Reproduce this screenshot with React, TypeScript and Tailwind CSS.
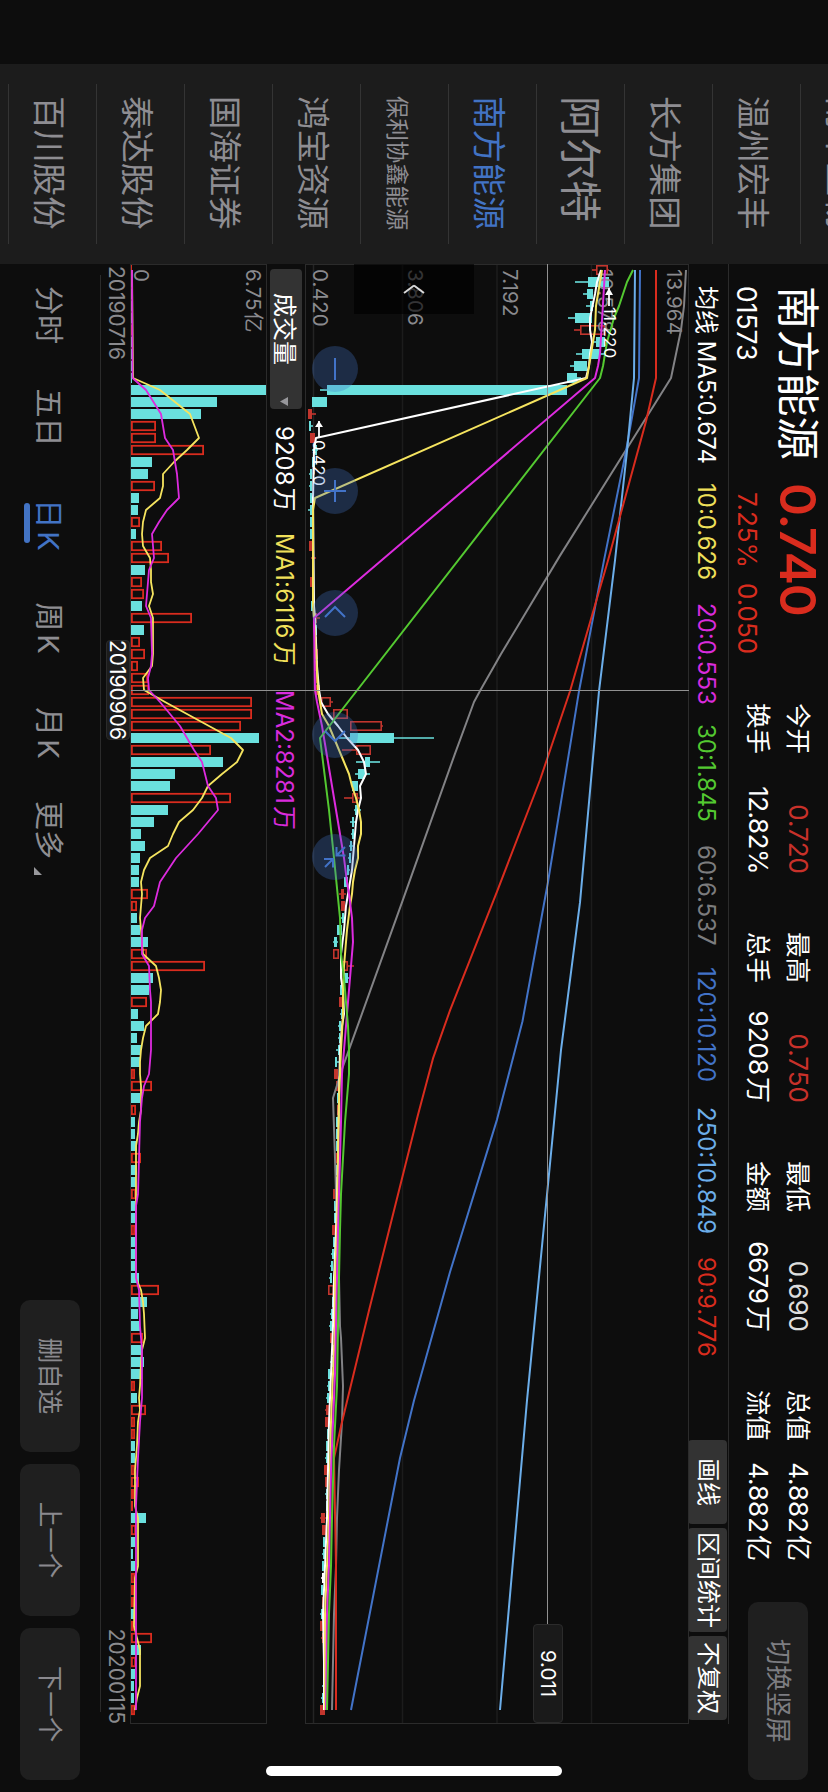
import clsx from "clsx";

const STOCKS = [
  { name: "南华生物", size: "text-[33.4px]" },
  { name: "温州宏丰", size: "text-[33.4px]" },
  { name: "长方集团", size: "text-[33.4px]" },
  { name: "阿尔特", size: "text-[42px]" },
  { name: "南方能源", size: "text-[33.4px]", active: true },
  { name: "保利协鑫能源", size: "text-[22.4px]" },
  { name: "鸿宝资源", size: "text-[33.4px]" },
  { name: "国海证券", size: "text-[33.4px]" },
  { name: "泰达股份", size: "text-[33.4px]" },
  { name: "百川股份", size: "text-[33.4px]" },
];

const QUOTES = [
  [
    { label: "今开", value: "0.720", color: "text-[#c8312a]" },
    { label: "换手", value: "12.82%", color: "text-white tracking-[-0.5px]" },
  ],
  [
    { label: "最高", value: "0.750", color: "text-[#c8312a]" },
    { label: "总手", value: "9208", unit: "万", color: "text-white" },
  ],
  [
    { label: "最低", value: "0.690", color: "text-[#dedede]" },
    { label: "金额", value: "6679", unit: "万", color: "text-white" },
  ],
  [
    { label: "总值", value: "4.882", unit: "亿", color: "text-white" },
    { label: "流值", value: "4.882", unit: "亿", color: "text-white" },
  ],
];

const AVERAGES = [
  { text: "10:0.626", style: "text-[#f0e05a] w-[120px]" },
  { text: "20:0.553", style: "text-[#d92bdc] w-[121px]" },
  { text: "30:1.845", style: "text-[#54c931] w-[121px]" },
  { text: "60:6.537", style: "text-[#7c7c7e] w-[122px]" },
  { text: "120:10.120", style: "text-[#4273c8] w-[140px]" },
  { text: "250:10.849", style: "text-[#6caeea] w-[150px]" },
  { text: "90:9.776", style: "text-[#d92c1e]" },
];

const PERIODS = [
  { name: "分时", width: "w-[102px]" },
  { name: "五日", width: "w-[103px]" },
  { name: "日", suffix: "K", width: "w-[112px]", active: true },
  { name: "周", suffix: "K", width: "w-[94px]" },
  { name: "月", suffix: "K", width: "w-[116px]" },
  { name: "更多", width: "w-[78px]", more: true },
];

// candle centres are 12px apart, heights are px above the panel's bottom
const STEP = 12;
const FIRST = 6;
const PRICE_H = 384;
const VOLUME_H = 136;

type Candle = [kind: string, low: number, bottom: number, top: number, high: number];
type Point = [index: number, height: number];

const CANDLES: Candle[] = [
  ["r", 287, 291, 303, 304], ["c", 270, 283, 304, 304], ["c", 278, 282, 288, 288],
  ["c", 281, 285, 288, 289], ["c", 263, 270, 287, 287], ["r", 269, 275, 300, 300],
  ["c", 287, 291, 300, 300], ["c", 271, 277, 295, 299], ["c", 265, 269, 282, 282],
  ["c", 262, 262, 272, 276], ["c", 15, 22, 262, 262], ["c", 7, 7, 22, 22],
  ["r", 3, 3, 7, 11], ["c", 4, 4, 6, 8], ["r", 5, 5, 10, 10],
  ["c", 7, 10, 12, 13], ["c", 7, 7, 10, 10], ["c", 4, 5, 7, 7],
  ["c", 4, 5, 7, 7], ["c", 5, 5, 7, 7], ["c", 3, 5, 7, 7],
  ["c", 5, 5, 7, 7], ["c", 5, 5, 7, 7], ["r", 4, 4, 9, 9],
  ["r", 6, 7, 9, 11], ["c", 7, 7, 9, 9], ["r", 5, 5, 8, 8],
  ["c", 7, 7, 9, 9], ["c", 6, 6, 9, 9], ["r", 8, 9, 12, 15],
  ["c", 9, 9, 12, 12], ["r", 10, 10, 12, 12], ["r", 10, 10, 13, 13],
  ["r", 10, 10, 13, 13], ["r", 11, 11, 13, 14], ["r", 11, 11, 15, 15],
  ["r", 16, 16, 26, 28], ["r", 28, 28, 43, 43], ["r", 45, 45, 77, 78],
  ["c", 34, 45, 89, 129], ["r", 37, 51, 66, 66], ["c", 51, 60, 65, 75],
  ["c", 50, 53, 60, 65], ["c", 47, 47, 53, 53], ["r", 39, 47, 53, 55],
  ["c", 49, 50, 53, 56], ["c", 45, 47, 49, 52], ["c", 46, 47, 49, 49],
  ["c", 44, 45, 47, 48], ["c", 43, 44, 46, 46], ["c", 42, 42, 44, 45],
  ["c", 39, 39, 43, 43], ["r", 34, 36, 39, 41], ["r", 36, 36, 40, 40],
  ["c", 36, 37, 39, 40], ["c", 32, 32, 37, 37], ["c", 28, 29, 32, 33],
  ["r", 28, 28, 34, 34], ["r", 35, 35, 43, 49], ["c", 39, 39, 43, 45],
  ["c", 35, 35, 38, 38], ["r", 34, 34, 38, 38], ["c", 35, 36, 38, 38],
  ["c", 33, 34, 36, 36], ["c", 33, 34, 35, 35], ["c", 31, 33, 35, 35],
  ["c", 30, 30, 32, 34], ["r", 29, 29, 33, 33], ["r", 31, 31, 34, 34],
  ["c", 32, 32, 34, 34], ["r", 32, 32, 34, 34], ["c", 31, 31, 33, 33],
  ["c", 31, 31, 33, 34], ["c", 31, 31, 33, 33], ["r", 30, 30, 33, 33],
  ["c", 31, 31, 33, 33], ["c", 30, 30, 32, 32], ["r", 28, 28, 32, 32],
  ["c", 29, 29, 31, 31], ["c", 29, 29, 31, 31], ["r", 27, 27, 31, 31],
  ["c", 28, 28, 30, 30], ["c", 26, 27, 29, 29], ["c", 25, 26, 28, 28],
  ["c", 24, 25, 27, 27], ["r", 23, 23, 29, 29], ["c", 27, 27, 29, 29],
  ["c", 25, 26, 28, 28], ["c", 24, 25, 27, 28], ["r", 25, 25, 28, 28],
  ["c", 27, 27, 29, 29], ["c", 25, 26, 28, 28], ["c", 23, 23, 25, 26],
  ["c", 22, 23, 25, 25], ["c", 21, 22, 24, 24], ["r", 20, 21, 24, 24],
  ["r", 20, 20, 24, 24], ["c", 22, 22, 24, 24], ["c", 21, 21, 23, 24],
  ["c", 20, 21, 23, 23], ["r", 19, 19, 23, 23], ["r", 20, 20, 23, 23],
  ["c", 20, 21, 23, 23], ["c", 21, 21, 23, 23], ["r", 15, 16, 20, 22],
  ["r", 17, 17, 21, 21], ["c", 18, 18, 20, 20], ["c", 17, 18, 20, 20],
  ["c", 17, 17, 19, 20], ["w", 16, 17, 19, 20], ["c", 16, 16, 18, 18],
  ["r", 17, 17, 19, 19], ["c", 15, 16, 18, 18], ["r", 15, 15, 18, 18],
  ["r", 16, 17, 19, 19], ["c", 18, 18, 20, 20], ["r", 18, 18, 20, 20],
  ["c", 18, 18, 20, 20], ["c", 17, 18, 19, 19], ["c", 16, 17, 19, 19],
  ["r", 15, 15, 20, 20],
];

const VOLUMES = (
  "r1 c1 c1 c1 c1 r1 c1 c1 c1 c1 c135 c86 c70 r25 r25 r73 c21 c17 r24 c8 c7 r9 c5 r31 r38 c14 r11 r13 c11 r61 " +
  "c13 r9 r14 r7 r17 r18 r121 r121 r110 c128 r80 c92 c44 c39 r100 c37 c23 c10 c14 c9 c8 c8 r17 r6 c6 c9 c17 r16 r74 c22 " +
  "c18 r16 c7 c13 c6 c10 c9 r4 r21 c9 r5 c4 c4 c6 r10 c6 c5 r5 c4 c4 r4 c4 c4 c4 c8 r28 c16 c7 c9 r12 " +
  "c10 c13 c11 r4 c6 r15 r4 r4 c4 c4 r4 r8 r3 r2 c15 r5 c4 c2 c4 r4 r3 r3 c3 r3 r21 c10 r5 c4 c3 c3 r4"
).split(" ");

const PRICE_LINES: { color: string; points: Point[] }[] = [
  {
    color: "#828285",
    points: [[0, 381], [3, 379], [5, 376], [7, 371], [9, 366], [23.8, 255], [32, 196], [35, 175.5], [36, 169], [40.3, 150], [52.7, 97], [66.6, 37], [69, 28], [74, 30], [77, 31], [80, 33], [84, 34], [88, 35], [89, 36], [93, 38], [96, 37], [100, 34], [104, 32], [108, 31], [112, 29], [116, 28], [120, 27]],
  },
  {
    color: "#4273c8",
    points: [[0, 335], [9, 334], [15.1, 321], [24.2, 299], [35.1, 274], [51, 243], [62.6, 217.5], [70.8, 192], [83.5, 145], [94.2, 109], [99, 95], [120, 46]],
  },
  {
    color: "#6caeea",
    points: [[0, 330], [9, 329], [15.1, 322], [24.2, 310], [35.1, 294], [52.7, 275], [65, 256], [76.2, 243], [94.2, 222], [120, 195]],
  },
  {
    color: "#d92c1e",
    points: [[0, 351], [9, 351], [12.6, 341], [24.2, 303], [35.1, 265], [42.5, 235], [51.8, 192], [61.7, 145], [65.7, 128], [70.4, 113], [75.7, 97], [86.7, 64], [96, 37], [99, 29], [108, 31], [120, 31]],
  },
  {
    color: "#ffffff",
    points: [[0, 296], [1, 292], [2, 290], [4, 285], [5, 285], [6, 287], [7, 285], [8, 284], [9, 281], [14, 11], [15, 9], [19, 8], [28, 9], [29, 10], [33, 12], [35, 14], [36, 16], [37, 23], [38, 33], [39, 42], [40, 53], [41, 59], [42, 61], [43, 55], [44, 56], [45, 53], [46, 51], [48, 49], [50, 47], [51, 45], [52, 43], [53, 41], [55, 39], [57, 36], [59, 36], [60, 38], [62, 39], [63, 37], [65, 35], [69, 34], [74, 33], [80, 31], [84, 29], [88, 28], [92, 26], [96, 24], [100, 23], [104, 22], [108, 20], [112, 18], [116, 19], [120, 19]],
  },
  {
    color: "#f5e45f",
    points: [[0, 297], [3, 291], [5, 290], [7, 286], [9, 282], [19, 10], [20, 8], [28, 8], [29, 9], [35, 13], [36, 15], [37, 17], [38, 24], [39, 29], [40, 34], [41, 39], [42, 44], [43, 47], [44, 51], [45, 54], [46, 56], [47, 56], [48, 53], [49, 53], [50, 50], [51, 48], [52, 47], [53, 45], [55, 42], [56, 41], [58, 39], [60, 38], [62, 38], [65, 36], [69, 34], [74, 33], [80, 32], [84, 30], [88, 30], [92, 28], [96, 26], [100, 25], [104, 24], [108, 22], [112, 20], [120, 20]],
  },
  {
    color: "#dd2bdf",
    points: [[0, 300], [7, 295], [8, 293], [9, 290], [29, 9], [35, 10], [36, 12], [38, 17], [39, 19], [41, 23], [43, 27], [45, 31], [47, 35], [49, 39], [51, 42], [52, 44], [54, 47], [56, 48], [57, 47], [59, 45], [61, 43], [63, 41], [65, 39], [67, 37], [71, 36], [74, 35], [80, 33], [84, 32], [88, 31], [92, 30], [96, 28], [100, 26], [104, 25], [108, 24], [112, 22], [120, 21]],
  },
  {
    color: "#54c931",
    points: [[0, 328], [1, 322], [2, 318], [3, 314], [4, 309], [6, 302], [8, 298], [9, 295], [39, 15], [41, 18], [45, 24], [49, 29], [54, 35], [57, 36], [59, 39], [61, 41], [63, 43], [65, 44], [67, 44], [69, 42], [71, 40], [74, 38], [77, 36], [80, 35], [84, 34], [88, 33], [93, 32], [98, 29], [104, 27], [108, 26], [112, 24], [120, 22]],
  },
];

const VOLUME_LINES: { color: string; points: Point[] }[] = [
  {
    color: "#f5e45f",
    points: [[0, 1], [9, 2], [10, 29], [11, 44], [12, 59], [14, 68], [15, 56], [16, 43], [17, 32], [18, 32], [19, 29], [20, 15], [21, 12], [22, 11], [23, 12], [24, 19], [25, 20], [26, 20], [27, 22], [28, 18], [29, 22], [32, 22], [33, 21], [34, 12], [35, 13], [36, 34], [38, 78], [39, 100], [40, 112], [41, 106], [42, 91], [43, 77], [44, 71], [45, 62], [46, 48], [47, 42], [48, 37], [49, 19], [50, 13], [51, 10], [52, 11], [54, 9], [56, 11], [57, 12], [58, 25], [59, 28], [60, 30], [61, 29], [62, 27], [63, 15], [64, 12], [65, 10], [66, 9], [67, 9], [68, 10], [70, 10], [71, 8], [72, 7], [73, 5], [84, 5], [85, 10], [86, 12], [87, 13], [89, 14], [90, 11], [91, 10], [93, 9], [94, 8], [95, 9], [96, 7], [98, 6], [100, 4], [103, 4], [104, 7], [108, 7], [109, 4], [113, 3], [114, 6], [115, 9], [118, 9], [119, 6], [120, 4]],
  },
  {
    color: "#dd2bdf",
    points: [[0, 1], [9, 1.5], [10, 15], [12, 30], [14, 34], [15, 42], [16, 44], [17, 46], [19, 48], [20, 36], [21, 28], [22, 21], [24, 23], [25, 18], [28, 15], [29, 20], [32, 21], [33, 20], [34, 17], [35, 18], [36, 29], [38, 49], [39, 56], [40, 63], [41, 71], [43, 77], [44, 85], [45, 87], [46, 77], [47, 67], [48, 56], [49, 45], [50, 37], [51, 29], [53, 23], [54, 14], [55, 11], [57, 11], [58, 18], [60, 19], [61, 20], [65, 20], [66, 19], [67, 18], [68, 13], [69, 11], [71, 9], [74, 8], [77, 7], [78, 5], [84, 5], [85, 8], [88, 9], [90, 11], [94, 11], [95, 10], [96, 9], [99, 7], [101, 6], [103, 5], [120, 5]],
  },
];

const CANDLE_COLORS: Record<string, string> = { r: "#c2352d", c: "#6ae0de", w: "#ffffff" };

const toPath = (points: Point[], height: number) =>
  points.map(([i, h]) => `${FIRST + i * STEP},${height - h}`).join(" ");

const PriceChart = () => (
  <svg width="1460" height={PRICE_H} className="block overflow-visible">
    <g stroke="#1c1c1c" strokeWidth="1.5">
      <line x1="0" x2="1459" y1="97.5" y2="97.5" />
      <line x1="0" x2="1459" y1="192" y2="192" />
      <line x1="0" x2="1459" y1="286.5" y2="286.5" />
      <line x1="0" x2="1459" y1="375.5" y2="375.5" stroke="#242424" />
    </g>
    <rect x="0.5" y="0.5" width="1459" height="383" fill="none" stroke="#2b2b2b" />

    {CANDLES.map(([kind, low, bottom, top, high], i) => {
      const x = FIRST + i * STEP;
      const color = CANDLE_COLORS[kind];
      const hollow = kind === "r" && top - bottom > 5;
      return (
        <g key={i}>
          <line x1={x} x2={x} y1={PRICE_H - high} y2={PRICE_H - top} stroke={color} strokeWidth="1.6" />
          <line x1={x} x2={x} y1={PRICE_H - bottom} y2={PRICE_H - low} stroke={color} strokeWidth="1.6" />
          <rect
            x={hollow ? x - 4.2 : x - 5}
            y={PRICE_H - top + (hollow ? 0.8 : 0)}
            width={hollow ? 8.4 : 10}
            height={top - bottom - (hollow ? 1.6 : 0)}
            fill={hollow ? "none" : color}
            stroke={hollow ? color : "none"}
            strokeWidth="1.6"
          />
        </g>
      );
    })}

    <g fill="#8a8a8e" fontSize="20.5" letterSpacing="0.2">
      <text x="5" y="22.5">13.964</text>
      <text x="5" y="91">10.578</text>
      <text x="5" y="186">7.192</text>
      <text x="5" y="281">3.806</text>
      <text x="5" y="376">0.420</text>
    </g>

    {PRICE_LINES.map(({ color, points }) => (
      <polyline key={color} points={toPath(points, PRICE_H)} fill="none" stroke={color} strokeWidth="2" strokeLinejoin="round" />
    ))}

    <g fill="#ffffff" fontSize="16.5">
      <path d="M24 80h18" stroke="#ffffff" strokeWidth="1.8" />
      <path d="M24 80l7-4v8z" />
      <text x="43" y="85.5" letterSpacing="0.5">11.220</text>
      <path d="M157 370h17" stroke="#ffffff" strokeWidth="1.8" />
      <path d="M157 370l6-4v8z" />
      <text x="176" y="376">0.420</text>
    </g>

    <rect x="0" y="215" width="50" height="120" fill="#000000" fillOpacity="0.62" />
    <path d="M29 265l-7.5 10M29 285l-7.5 -10" fill="none" stroke="#d8d8d8" strokeWidth="2" />
  </svg>
);

const VolumeChart = () => (
  <svg width="1460" height={VOLUME_H} className="block overflow-visible">
    <rect x="0.5" y="0.5" width="1459" height="136" fill="none" stroke="#2b2b2b" />
    {VOLUMES.map((item, i) => {
      const h = Number(item.slice(1));
      const x = FIRST + i * STEP;
      if (item[0] === "r" && h > 3) {
        return (
          <rect key={i} x={x - 4.2} y={VOLUME_H - h + 0.9} width="8.4" height={h - 1.8} fill="none" stroke="#d92c1e" strokeWidth="1.8" />
        );
      }
      return (
        <rect key={i} x={x - 5} y={VOLUME_H - h} width="10" height={h} fill={item[0] === "r" ? "#d92c1e" : "#6ae0de"} />
      );
    })}
    <g fill="#8a8a8e" fontSize="20.5">
      <text x="5" y="21.5">6.75<tspan dx="1.5">亿</tspan></text>
      <text x="5" y="133">0</text>
    </g>
    {VOLUME_LINES.map(({ color, points }) => (
      <polyline key={color} points={toPath(points, VOLUME_H)} fill="none" stroke={color} strokeWidth="1.8" strokeLinejoin="round" />
    ))}
  </svg>
);

const CONTROLS = [
  "M-11 0H11",
  "M-11 0H11M0 -11V11",
  "M4 -10L-6 0L4 10",
  "M-4 -10L6 0L-4 10",
  "M-10 -10L-1.5 -1.5M-10 -1.5H-1.5V-10.5M10 10L2 2M2 11V2H10.5",
];

const Sidebar = () => (
  <aside className="ml-16 h-full w-[200px] shrink-0 overflow-hidden bg-[#1c1c1c]">
    <div className="-mt-[60px]">
      {STOCKS.map(({ name, size, active }) => (
        <div
          key={name}
          className={clsx(
            "mx-5 h-22 whitespace-nowrap border-b border-[#343434] pl-3 text-[42px] leading-[88px]",
            active ? "text-[#4273c4]" : "text-[#8e8d92]"
          )}
        >
          <span className={size}>{name}</span>
        </div>
      ))}
    </div>
  </aside>
);

const Header = () => (
  <header className="flex h-[99px] w-[1528px] shrink-0 pl-[22px] pr-3">
    <div className="w-[197px] pt-1.5 leading-[48px]">
      <div className="text-[43.5px] text-white">南方能源</div>
      <div className="pt-[3px] text-[26.5px] text-white">01573</div>
    </div>
    <div className="w-[220px] pt-1.5 leading-[48px] text-[#d92c1e]">
      <div className="text-[50px] font-semibold tracking-[-1.2px]">0.740</div>
      <div className="flex gap-4 pl-[9px] pt-[3px] text-[26px]">
        <span className="w-[75px]">7.25%</span>
        <span>0.050</span>
      </div>
    </div>
    <div className="flex gap-[58px] pt-2.5 text-[26px] leading-10">
      {QUOTES.map((column, i) => (
        <div key={i} className="w-[171px] whitespace-nowrap">
          {column.map(({ label, value, unit, color }) => (
            <div key={label} className="flex justify-between">
              <span className="text-[25.5px] text-white">{label}</span>
              <span className={color}>
                {value}
                {unit && <span className="ml-0.5">{unit}</span>}
              </span>
            </div>
          ))}
        </div>
      ))}
    </div>
    <button className="ml-auto mt-5 h-15 w-[178px] rounded-[10px] bg-[#1f1f1f] pb-0.5 text-[26px] text-[#7d7d81]">
      切换竖屏
    </button>
  </header>
);

const AverageBar = () => (
  <div className="flex h-[41px] w-[1460px] items-center border-t border-[#2b2b2b] pl-[22px] text-[24px]">
    <div className="flex pt-1 leading-9">
      <span className="w-[197px] whitespace-nowrap text-white">均线 MA5:0.674</span>
      {AVERAGES.map(({ text, style }) => (
        <span key={text} className={style}>{text}</span>
      ))}
    </div>
    <div className="ml-auto mr-1 flex gap-1 text-white">
      <button className="h-[39px] w-[84px] rounded bg-[#333333]">画线</button>
      <button className="h-[39px] w-[104px] rounded bg-[#333333]">区间统计</button>
      <button className="h-[39px] w-[84px] rounded bg-[#333333]">不复权</button>
    </div>
  </div>
);

const VolumeBar = () => (
  <div className="flex h-[38px] items-center pl-[5px] text-[24px] leading-[28px]">
    <button className="flex h-8 w-[140px] items-center rounded bg-[#333333] pl-6 text-white">
      <span className="pt-[3px]">成交量</span>
      <svg width="9" height="8" className="ml-8 mt-1">
        <path d="M0 0h9L4.5 8z" fill="#98989c" />
      </svg>
    </button>
    <div className="flex pl-[17px] pt-1">
      <span className="w-[107px] text-white">9208<span className="ml-0.5">万</span></span>
      <span className="w-[157px] text-[#f0e05a] tracking-[0.3px]">MA1:6116<span className="ml-[3px]">万</span></span>
      <span className="text-[#d92bdc]">MA2:8281<span className="ml-0.5">万</span></span>
    </div>
  </div>
);

const Charts = () => (
  <section className="relative">
    <PriceChart />
    <VolumeBar />
    <VolumeChart />
    <div className="flex h-[30px] w-[1460px] items-start justify-between pl-[2px] pt-0.5 text-[21px] leading-[26px] text-[#8a8a8e]">
      <span>20190716</span>
      <span>20200115</span>
    </div>

    <div className="absolute left-0 top-[141px] h-px w-[1360px] bg-[#919191]" />
    <div className="absolute left-[426px] top-0 h-[558px] w-px bg-[#919191]" />
    <div className="absolute left-[1360px] top-[126px] flex h-[30px] w-[99px] items-center justify-center rounded border border-[#2b2b2b] bg-[#1a1a1a] text-[20.5px] text-white">
      9.011
    </div>
    <div className="absolute left-[376px] top-[559px] flex h-6 w-[100px] items-center justify-center rounded border border-[#2b2b2b] bg-[#1c1c1c] pt-px text-[21px] text-white">
      20190906
    </div>
    <div className="absolute left-[82px] top-[331px] flex gap-[76px]">
      {CONTROLS.map((d) => (
        <button key={d} className="size-[46px] rounded-full bg-[#4273c8]/30">
          <svg viewBox="-23 -23 46 46" fill="none" stroke="#4273c8" strokeWidth="2">
            <path d={d} />
          </svg>
        </button>
      ))}
    </div>
  </section>
);

const Footer = () => (
  <footer className="flex h-[101px] w-[1528px] items-center pr-3 text-[29px]">
    <div className="flex">
      {PERIODS.map(({ name, suffix, width, active, more }) => (
        <div key={name} className={clsx("flex justify-center", width, active ? "text-[#4273c4]" : "text-[#8e8d92]")}>
          <span className="relative top-0.5 whitespace-nowrap leading-10">
            {name}
            {suffix && <span className="ml-[3px]">{suffix}</span>}
            {active && <i className="absolute -bottom-1 left-1 h-1.5 w-10 rounded-full bg-[#4273c4]" />}
            {more && (
              <svg width="8" height="8" className="absolute -right-4 bottom-1.5">
                <path d="M8 0v8H0z" fill="#98989c" />
              </svg>
            )}
          </span>
        </div>
      ))}
    </div>
    <div className="ml-auto flex gap-3 text-[25.5px] text-[#8a898e]">
      {["删自选", "上一个", "下一个"].map((name) => (
        <button key={name} className="h-15 w-[152px] rounded-[10px] bg-[#1f1f1f]">{name}</button>
      ))}
    </div>
  </footer>
);

export default function App() {
  return (
    <div className="h-[1792px] w-[828px] overflow-hidden bg-[#0d0d0d]">
      <div className="relative flex h-[828px] w-[1792px] origin-top-left translate-x-[828px] rotate-90 bg-[#0d0d0d] font-['Inter','Noto_Sans_CJK_SC',sans-serif]">
        <Sidebar />
        <main className="flex w-[1528px] flex-col">
          <Header />
          <AverageBar />
          <div className="-mt-px">
            <Charts />
          </div>
          <div className="ml-[11px] w-[1437px] border-t border-[#2b2b2b]" />
          <Footer />
        </main>
        <div className="absolute left-[1766px] top-[266px] h-[296px] w-2.5 rounded-full bg-white" />
      </div>
    </div>
  );
}
